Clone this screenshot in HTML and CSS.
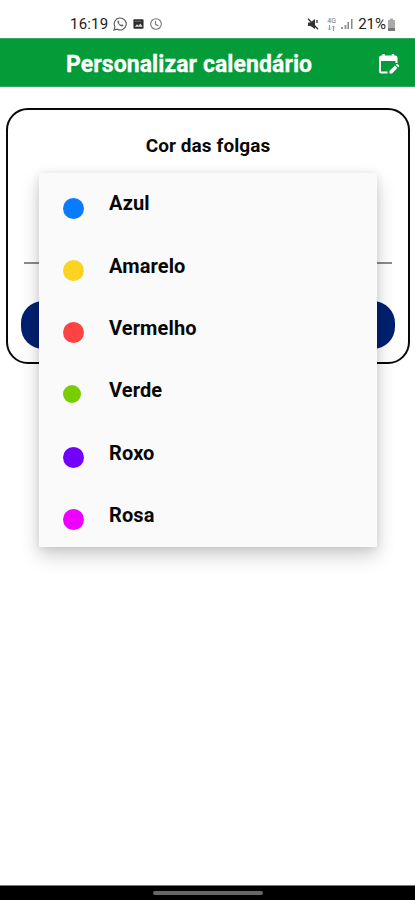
FILE: index.html
```html
<!DOCTYPE html>
<html lang="pt-BR">
<head>
<meta charset="utf-8">
<title>Personalizar calendário</title>
<link rel="stylesheet" href="styles.css">
</head>
<body>
<div class="screen">
  <div class="status">
    <div class="status-left">
      <span class="clock">16:19</span>
      <svg width="14" height="14" viewBox="0 0 14 14" fill="none" stroke="#555" stroke-width="1.1"><path d="M1 13l.9-3.2A6 6 0 1 1 4.200 12.200z"/><path d="M4.500 3.900c-.8 1.700 2.500 5.800 5 5.500 1-.3 1-1 .9-1.400L8.900 7.300l-.7.800C7 7.600 6.200 6.800 5.800 5.800l.6-.7-.7-1.500z" fill="#666" stroke="none"/></svg>
      <svg width="11" height="12" viewBox="0 0 12 12"><rect x=".5" y=".8" width="11" height="10.400" rx="1" fill="#2c2c2c"/><path d="M2 9l2.400-2.600 1.600 1.600 2-2.600 2.500 3.600z" fill="#ddd"/><path d="M2 3h7" stroke="#777"/></svg>
      <svg width="12" height="12" viewBox="0 0 12 12" fill="none" stroke="#777" stroke-width="1.100"><circle cx="6" cy="6" r="5.300"/><path d="M5.500 2.800v3.500l3 1.600"/></svg>
    </div>
    <div class="status-right">
      <svg width="12" height="12" viewBox="0 0 12 12"><path d="M1 4.500h2.500L8 1v10L3.500 8H1z" fill="#333"/><path d="M1 .8l10 10.400M10 2v3" stroke="#333" stroke-width="1.300"/></svg>
      <span class="network"><span>4G</span><svg width="9" height="6" viewBox="0 0 9 6" fill="none" stroke="#999"><path d="M2.500 0v5M1 3.500l1.500 1.500L4 3.500M6.500 6V1M5 2.500L6.500 1 8 2.500"/></svg></span>
      <svg class="signal" width="12" height="12" viewBox="0 0 12 12"><path d="M0 9h2v2H0zM3.500 7h2v4h-2z" fill="#999"/><path d="M6.500 4H8v7H6.500zM10 1h1.500v10H10z" fill="#888"/></svg>
      <span class="percent">21%</span>
      <svg width="9" height="13" viewBox="0 0 9 13"><path d="M3 .5h3V2h2v11H1V2h2z" fill="#aaa"/><path d="M1 10h7v3H1z" fill="#777"/></svg>
    </div>
  </div>
  <header class="appbar">
    <h1>Personalizar calendário</h1>
    <svg class="edit" width="22" height="22" viewBox="0 0 22 22" fill="none" stroke="#fff" stroke-width="2"><path d="M9.500 19.500H3.500Q2 19.500 2 18V4.500Q2 3.500 3.500 3.500h13.500Q18.500 3.500 18.500 4.500V10"/><path d="M2 3.500h16.500V8H2z" fill="#fff" stroke="none"/><path d="M5.500 1v4M15 1v4" stroke-width="2.400"/><path d="M11.500 20.500v-2.500l5.400-5.400 2.500 2.500-5.400 5.400zM17.700 11.800l.9-.9q.4-.4.900 0l1.600 1.600q.4.500 0 .9l-.9.900z" fill="#fff" stroke="none"/></svg>
  </header>
  <main class="content">
    <section class="card">
      <h2>Cor das folgas</h2>
      <div class="field"></div>
      <div class="button"></div>
      <ul class="menu">
        <li><i class="dot azul"></i><span>Azul</span></li>
        <li><i class="dot amarelo"></i><span>Amarelo</span></li>
        <li><i class="dot vermelho"></i><span>Vermelho</span></li>
        <li><i class="dot verde"></i><span>Verde</span></li>
        <li><i class="dot roxo"></i><span>Roxo</span></li>
        <li><i class="dot rosa"></i><span>Rosa</span></li>
      </ul>
    </section>
  </main>
  <footer class="navbar"><div class="handle"></div></footer>
</div>
</body>
</html>
```
FILE: styles.css
```css
* { box-sizing: border-box; }
body { margin: 0; background: #fff; color: #080808; font-family: Roboto, "Liberation Sans", sans-serif; }
.screen { display: flex; flex-direction: column; width: 415px; height: 900px; overflow: hidden; }
.status { height: 38px; flex: none; display: flex; justify-content: space-between; padding: 11px 19px 0 70px; }
.status-left, .status-right { display: flex; align-items: center; height: 28px; margin-top: -1px; }
.status-left { gap: 6px; }
.clock { font-size: 15px; letter-spacing: .2px; margin-right: -1px; color: #222; }
.percent { font-size: 15px; color: #222; margin-left: 5px; margin-right: 1px; }
.network { display: flex; flex-direction: column; align-items: center; font-size: 7px; line-height: 7px; color: #777; margin: 0 5px 0 8px; width: 9px; }
.appbar { height: 49px; flex: none; background: #049c38; border-top: 1px solid #35a65a; border-bottom: 1px solid #35a65a; display: flex; align-items: center; justify-content: space-between; padding: 0 15px 0 66px; }
.appbar h1 { margin: 4px 0 0; color: #fff; font-size: 23px; letter-spacing: .08px; line-height: 28px; font-weight: 700; white-space: nowrap; -webkit-text-stroke: .3px #fff; }
.edit { margin-top: 2px; }
.content { flex: 1; padding: 21px 5px 0 6px; }
.card { position: relative; height: 256px; border: 2px solid #080808; border-radius: 22px; padding: 0 13px; }
.card h2 { margin: 0; padding-top: 24px; height: 152px; font-size: 19px; letter-spacing: .08px; line-height: 24px; font-weight: 700; text-align: center; }
.field { height: 2px; margin: 0 3px; background: #8c8c8c; }
.button { height: 48px; margin-top: 37px; border-radius: 22px; background: #00206f; }
.menu { position: absolute; left: 31px; top: 63px; width: 338px; height: 374px; margin: 0; padding: 0; list-style: none; background: #fafafa; box-shadow: 0 9px 18px rgba(0,0,0,.19), 0 1px 8px rgba(0,0,0,.1); }
.menu li { height: 62.400px; display: flex; padding-left: 24px; font-size: 20px; letter-spacing: .12px; line-height: 24px; font-weight: 700; }
.menu span { padding-top: 18.200px; }
.dot { width: 21px; height: 21px; border-radius: 50%; margin: 24.500px 25px 0 0; flex: none; }
.azul { background: #087bff; }
.amarelo { background: #fbd421; }
.vermelho { background: #ff4343; }
.verde { background: #78cd00; width: 18px; height: 18px; margin-right: 28px; }
.roxo { background: #7100ff; }
.rosa { background: #ed00ff; }
.navbar { height: 15px; flex: none; background: #000; border-top: 1px solid #777; display: flex; justify-content: center; padding-top: 5px; }
.handle { width: 110px; height: 4px; border-radius: 2px; background: #666; }
```
